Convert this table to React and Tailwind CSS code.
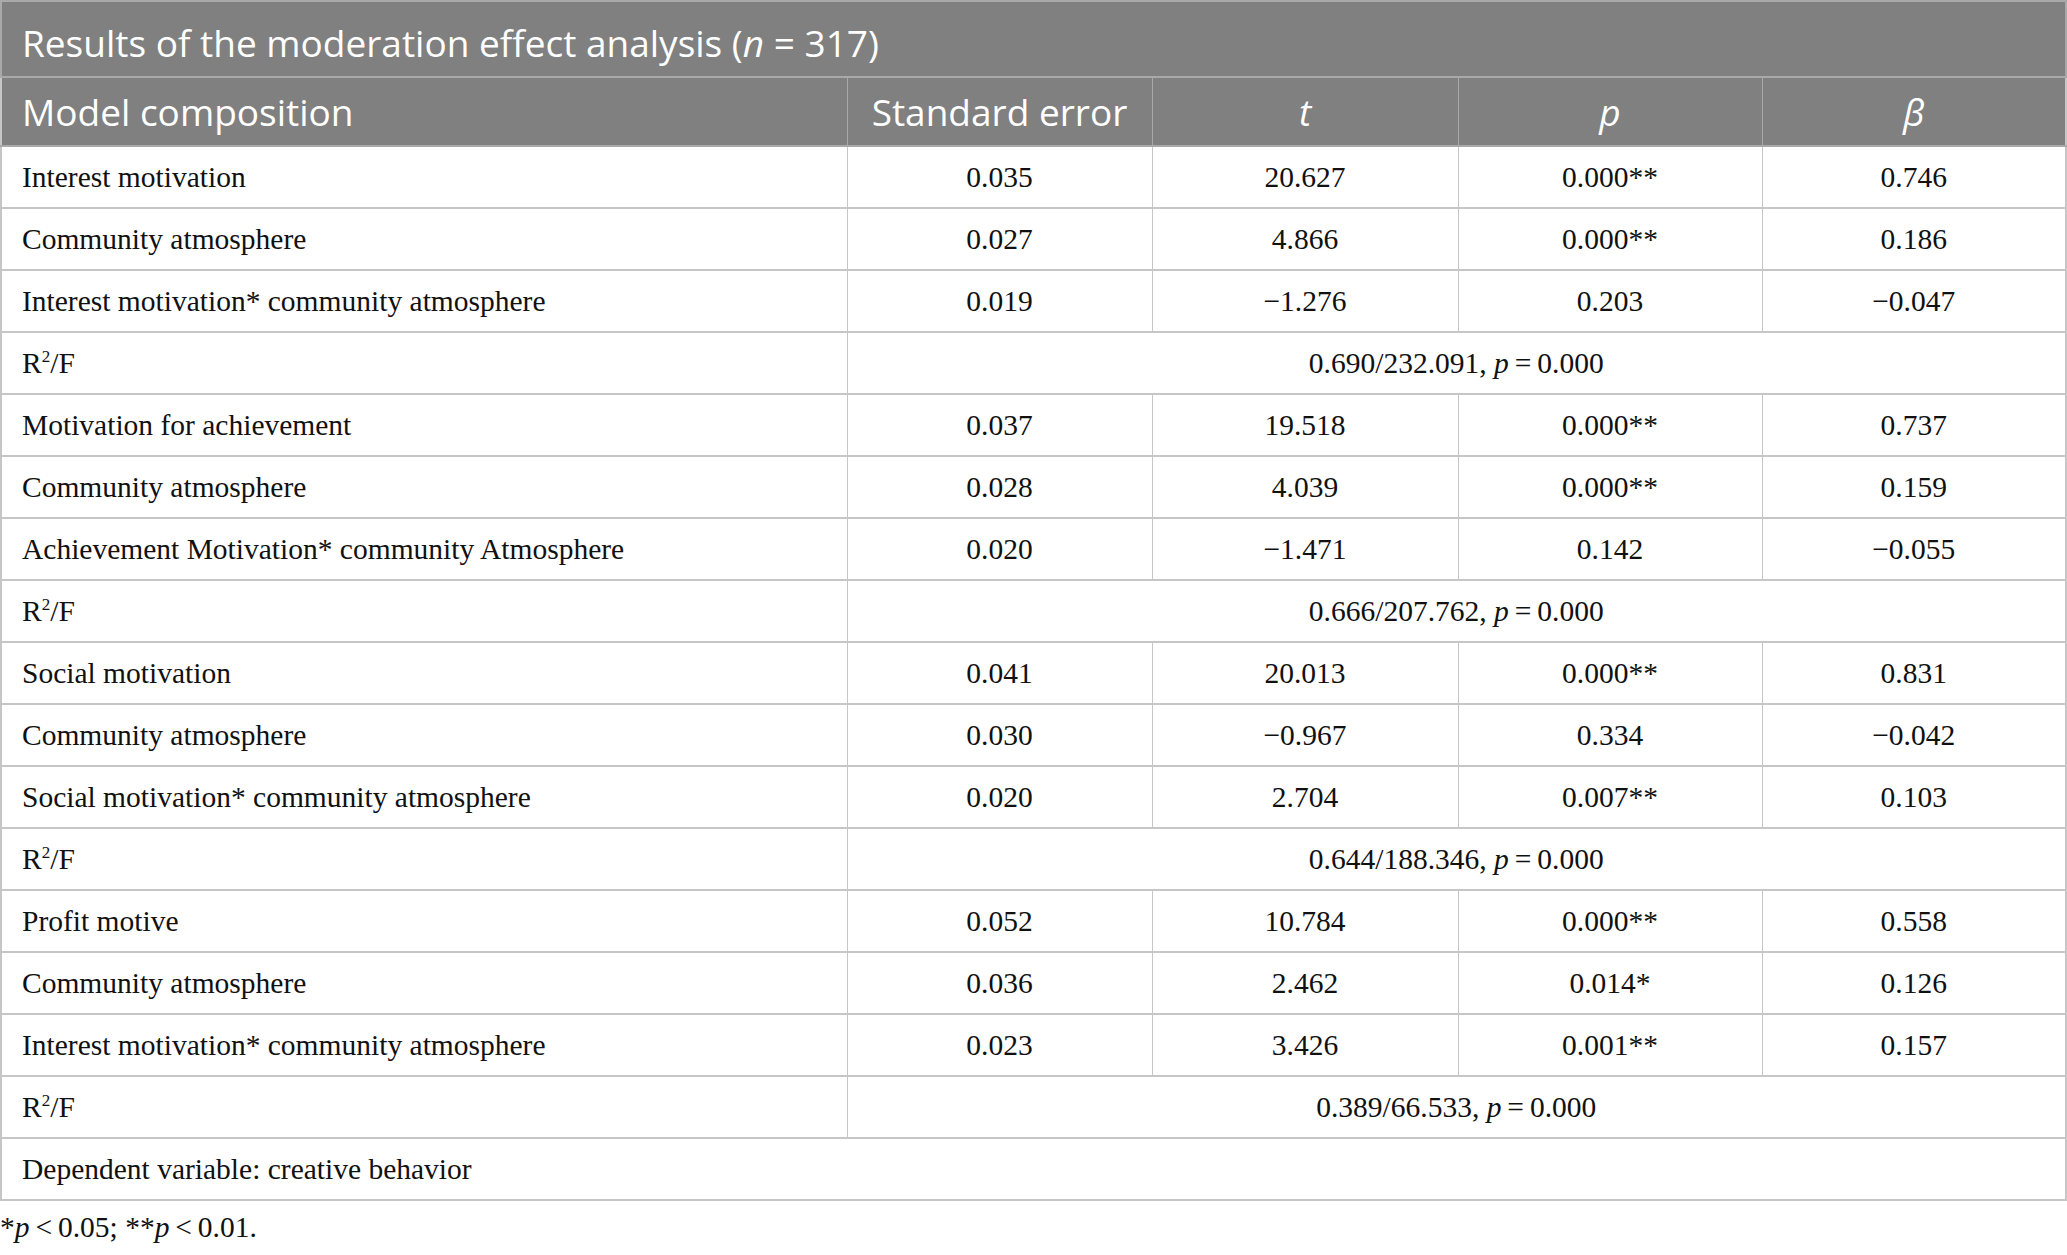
const rows = [
  ['Interest motivation', '0.035', '20.627', '0.000**', '0.746'],
  ['Community atmosphere', '0.027', '4.866', '0.000**', '0.186'],
  ['Interest motivation* community atmosphere', '0.019', '\u22121.276', '0.203', '\u22120.047'],
  ['R2', '0.690/232.091'],
  ['Motivation for achievement', '0.037', '19.518', '0.000**', '0.737'],
  ['Community atmosphere', '0.028', '4.039', '0.000**', '0.159'],
  ['Achievement Motivation* community Atmosphere', '0.020', '\u22121.471', '0.142', '\u22120.055'],
  ['R2', '0.666/207.762'],
  ['Social motivation', '0.041', '20.013', '0.000**', '0.831'],
  ['Community atmosphere', '0.030', '\u22120.967', '0.334', '\u22120.042'],
  ['Social motivation* community atmosphere', '0.020', '2.704', '0.007**', '0.103'],
  ['R2', '0.644/188.346'],
  ['Profit motive', '0.052', '10.784', '0.000**', '0.558'],
  ['Community atmosphere', '0.036', '2.462', '0.014*', '0.126'],
  ['Interest motivation* community atmosphere', '0.023', '3.426', '0.001**', '0.157'],
  ['R2', '0.389/66.533'],
];

const cell = 'h-[62px] border-x border-y-2 border-[#c6c6c6] px-[20px] py-0';

function PValue({ v }) {
  return (
    <>
      {v}, <i>p</i>{'\u2009=\u2009'}0.000
    </>
  );
}

export default function App() {
  return (
    <div className="w-[2067px] bg-white text-[#111] font-['Liberation_Serif',serif]">
      <table className="w-full border-collapse table-fixed border-2 border-[#c6c6c6]">
        <colgroup>
          <col className="w-[846px]" />
          <col className="w-[305px]" />
          <col className="w-[306px]" />
          <col className="w-[304px]" />
          <col />
        </colgroup>
        <thead className="bg-[#7f807f] text-white font-['Open_Sans',sans-serif] text-[37px]">
          <tr>
            <th colSpan={5} className="h-[76px] border-2 border-[#a9a9a9] px-[20px] pt-[8px] pb-0 text-left font-normal">
              Results of the moderation effect analysis (<i>n</i> = 317)
            </th>
          </tr>
          <tr>
            <th className="h-[69px] border-x border-y-2 border-[#a9a9a9] px-[20px] text-left font-normal">Model composition</th>
            <th className="border-x border-y-2 border-[#a9a9a9] font-normal">Standard error</th>
            <th className="border-x border-y-2 border-[#a9a9a9] font-normal italic">t</th>
            <th className="border-x border-y-2 border-[#a9a9a9] font-normal italic">p</th>
            <th className="border-x border-y-2 border-[#a9a9a9] font-normal italic">β</th>
          </tr>
        </thead>
        <tbody className="text-[29.5px]">
          {rows.map((r, i) =>
            r[0] === 'R2' ? (
              <tr key={i}>
                <td className={`${cell} text-left`}>
                  R<sup className="text-[17px] -top-[11px]">2</sup>/F
                </td>
                <td colSpan={4} className={`${cell} text-center`}>
                  <PValue v={r[1]} />
                </td>
              </tr>
            ) : (
              <tr key={i}>
                <td className={`${cell} text-left`}>{r[0]}</td>
                <td className={`${cell} text-center`}>{r[1]}</td>
                <td className={`${cell} text-center`}>{r[2]}</td>
                <td className={`${cell} text-center`}>{r[3]}</td>
                <td className={`${cell} text-center`}>{r[4]}</td>
              </tr>
            )
          )}
          <tr>
            <td colSpan={5} className={`${cell} text-left`}>Dependent variable: creative behavior</td>
          </tr>
        </tbody>
      </table>
      <p className="mt-[10px] text-[29.5px] leading-[32px]">
        *<i>p</i>{'\u2009<\u2009'}0.05; **<i>p</i>{'\u2009<\u2009'}0.01.
      </p>
    </div>
  );
}
